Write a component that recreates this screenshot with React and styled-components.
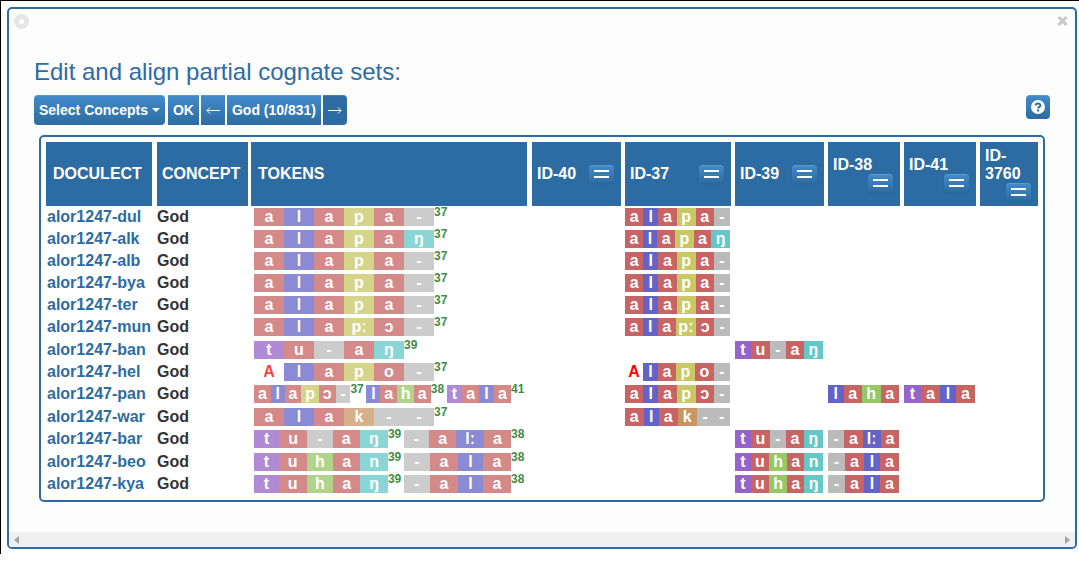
import React from "react";
import styled, { createGlobalStyle, css } from "styled-components";

const BLUE = "#2d6ca2";

const GlobalStyle = createGlobalStyle`
  * { box-sizing: border-box; }
  body {
    margin: 0;
    background: #fff;
    color: #333;
    font-family: "Liberation Sans", Arial, Helvetica, sans-serif;
    font-size: 16px;
  }
`;

const Page = styled.main`
  border-top: 1px solid #000;
  border-left: 1px solid #000;
  padding: 6px 2px 5px 6px;
`;

const Panel = styled.section`
  border: 2px solid ${BLUE};
  border-radius: 5px;
  background: #fdfdfd;
  overflow: hidden;
`;

const PanelBar = styled.header`
  display: flex;
  justify-content: space-between;
  align-items: flex-start;
  height: 48px;
  padding: 5px 7px 0 5px;
`;

const PlainButton = styled.button`
  display: flex;
  padding: 0;
  border: 0;
  background: none;
`;

const PanelBody = styled.div`
  padding: 0 30px 30px;
`;

const Title = styled.h1`
  margin: 0 -5px 8px;
  color: ${BLUE};
  font-size: 24px;
  font-weight: 400;
  line-height: 30px;
`;

const Toolbar = styled.div`
  display: flex;
  align-items: flex-start;
  gap: 2px;
  margin: 0 -5px 10px;
`;

const ToolButton = styled.button`
  display: flex;
  align-items: center;
  gap: 4px;
  height: 30px;
  padding: 0 5px;
  border: 0;
  border-radius: ${(p) => p.$corners || "0"};
  background: ${(p) => (p.$active ? BLUE : `linear-gradient(#428bca, ${BLUE})`)};
  color: #fff;
  font: bold 14px "Liberation Sans", Arial, sans-serif;
  white-space: nowrap;
  box-shadow: inset 0 1px 0 rgba(255, 255, 255, 0.12);
`;

const MenuButton = styled(ToolButton)`
  margin-right: 1px;
`;

const HelpButton = styled(ToolButton)`
  justify-content: center;
  width: 24px;
  height: 24px;
  margin-left: auto;
`;

const Frame = styled.div`
  padding: 5px;
  border: 2px solid ${BLUE};
  border-radius: 5px;
  background: #fff;
`;

const Table = styled.table`
  width: 100%;
  table-layout: fixed;
  border-collapse: separate;
  border-spacing: 0;
  font-weight: bold;
`;

const Col = styled.col`
  width: ${(p) => p.$width}px;
`;

const HeadCell = styled.th`
  height: 64px;
  padding: 0 7px 0 ${(p) => p.$inset || 5}px;
  border-right: ${(p) => p.$gap || 0}px solid #fff;
  background: ${BLUE};
  background-clip: padding-box;
  color: #fff;
  line-height: 18px;
  text-align: left;
`;

const HeadContent = styled.div`
  display: flex;
  flex-wrap: wrap;
  align-items: center;
  justify-content: space-between;
`;

const AlignButton = styled.button`
  display: flex;
  align-items: center;
  justify-content: center;
  width: 25px;
  height: 18px;
  margin-left: auto;
  padding: 0;
  border: 0;
  border-radius: 4px;
  background: linear-gradient(#428bca, ${BLUE});
  box-shadow: inset 0 1px 0 rgba(255, 255, 255, 0.15), 0 1px 2px rgba(0, 0, 0, 0.08);
`;

const Row = styled.tr`
  height: ${(p) => (p.$tall ? 23 : 22)}px;
`;

const Cell = styled.td`
  padding: 0 ${(p) => p.$end || 0}px 0 ${(p) => p.$start || 0}px;
  line-height: 22px;
  white-space: nowrap;
  vertical-align: top;
`;

const DoculectLink = styled.a`
  color: ${BLUE};
  text-decoration: none;
`;

const TokenLine = styled.div`
  display: flex;
  padding-top: 2px;
  opacity: 0.75;
`;

const Morpheme = styled.div`
  display: flex;
  flex: ${(p) => (p.$fill ? `${p.$count} 1 0` : "none")};
`;

const CognateId = styled.sup`
  width: 16px;
  color: #006400;
  font-size: 12px;
  line-height: 8px;
`;

const Alignment = styled.div`
  display: flex;
  padding-top: 2px;
`;

const soundClasses = {
  a: ["#c86464", 18],
  o: ["#c86464", 19],
  u: ["#c86464", 19],
  "ɔ": ["#c86464", 18],
  l: ["#6464c8", 15],
  "lː": ["#6464c8", 18],
  p: ["#c8c864", 19],
  "pː": ["#c8c864", 21],
  k: ["#c89664", 19],
  t: ["#9664c8", 16],
  h: ["#96c864", 18],
  n: ["#64c8c8", 19],
  "ŋ": ["#64c8c8", 19],
  "-": ["#bbbbbb", 16],
  A: ["transparent", 18],
};

const Sound = styled.span`
  flex: ${(p) => (p.$even ? "0 0 30px" : `1 1 ${soundClasses[p.$sound][1]}px`)};
  min-width: 0;
  height: 18px;
  background: ${(p) => soundClasses[p.$sound][0]};
  color: #fff;
  line-height: 18px;
  text-align: center;
  ${(p) => p.$sound === "A" && css`color: #f00;`}
`;

const ScrollTrack = styled.div`
  display: flex;
  align-items: center;
  justify-content: space-between;
  height: 15px;
  padding: 0 5px;
  background: #f0f0f0;
`;

const columns = [
  { label: "DOCULECT", width: 111, gap: 5, inset: 7 },
  { label: "CONCEPT", width: 94, gap: 3 },
  { label: "TOKENS", width: 281, gap: 5, inset: 7 },
  { label: "ID-40", width: 93, gap: 4, id: 40 },
  { label: "ID-37", width: 110, gap: 4, id: 37 },
  { label: "ID-39", width: 93, gap: 4, id: 39 },
  { label: "ID-38", width: 76, gap: 4, id: 38 },
  { label: "ID-41", width: 76, gap: 4, id: 41 },
  { label: "ID-3760", width: 58, id: 3760 },
];

const words = [
  { name: "dul", parts: [[37, "a l a p a -"]] },
  { name: "alk", parts: [[37, "a l a p a ŋ"]] },
  { name: "alb", parts: [[37, "a l a p a -"]] },
  { name: "bya", parts: [[37, "a l a p a -"]] },
  { name: "ter", parts: [[37, "a l a p a -"]] },
  { name: "mun", tall: true, parts: [[37, "a l a pː ɔ -"]] },
  { name: "ban", parts: [[39, "t u - a ŋ"]] },
  { name: "hel", parts: [[37, "A l a p o -"]] },
  { name: "pan", tall: true, parts: [[37, "a l a p ɔ -"], [38, "l a h a"], [41, "t a l a"]] },
  { name: "war", parts: [[37, "a l a k - -"]] },
  { name: "bar", tall: true, parts: [[39, "t u - a ŋ"], [38, "- a lː a"]] },
  { name: "beo", parts: [[39, "t u h a n"], [38, "- a l a"]] },
  { name: "kya", parts: [[39, "t u h a ŋ"], [38, "- a l a"]] },
];

function Sounds({ text, even }) {
  return text.split(" ").map((s, i) => (
    <Sound key={i} $sound={s} $even={even}>{s}</Sound>
  ));
}

function Tokens({ parts }) {
  const fill = parts.length > 1;
  return (
    <TokenLine>
      {parts.map(([id, text]) => (
        <React.Fragment key={id}>
          <Morpheme $fill={fill} $count={text.split(" ").length}>
            <Sounds text={text} even={!fill} />
          </Morpheme>
          <CognateId>{id}</CognateId>
        </React.Fragment>
      ))}
    </TokenLine>
  );
}

function WordRow({ word }) {
  return (
    <Row $tall={word.tall}>
      <Cell $start={1}>
        <DoculectLink href="#">alor1247-{word.name}</DoculectLink>
      </Cell>
      <Cell>God</Cell>
      <Cell $start={3} $end={5}>
        <Tokens parts={word.parts} />
      </Cell>
      {columns.filter((c) => c.id).map((c) => {
        const part = word.parts.find(([id]) => id === c.id);
        return (
          <Cell key={c.id} $end={5}>
            {part && <Alignment><Sounds text={part[1]} /></Alignment>}
          </Cell>
        );
      })}
    </Row>
  );
}

function Arrow({ back }) {
  return (
    <svg width="14" height="8" viewBox="0 0 14 8" fill="none" stroke="#fff">
      <path d={back ? "M14 4.5H1 M4 1.5L1 4.5L4 7.5" : "M0 4.5H13 M10 1.5L13 4.5L10 7.5"} />
    </svg>
  );
}

export default function App() {
  return (
    <Page>
      <GlobalStyle />
      <Panel>
        <PanelBar>
          <PlainButton aria-label="Refresh panel">
            <svg width="15" height="15" viewBox="0 0 15 15">
              <circle cx="7.5" cy="7.5" r="5" fill="#fff" stroke="#e6e6e6" strokeWidth="5" />
            </svg>
          </PlainButton>
          <PlainButton aria-label="Close panel">
            <svg width="11" height="13" viewBox="0 0 11 13">
              <path d="M1.5 3 L9.5 11 M9.5 3 L1.5 11" stroke="#c8c8c8" strokeWidth="3" />
            </svg>
          </PlainButton>
        </PanelBar>
        <PanelBody>
          <Title>Edit and align partial cognate sets:</Title>
          <Toolbar>
            <MenuButton $corners="4px" aria-haspopup="true">
              Select Concepts
              <svg width="8" height="4" viewBox="0 0 8 4"><path d="M0 0h8L4 4z" fill="#fff" /></svg>
            </MenuButton>
            <ToolButton>OK</ToolButton>
            <ToolButton aria-label="Previous concept"><Arrow back /></ToolButton>
            <ToolButton>God (10/831)</ToolButton>
            <ToolButton $corners="0 4px 4px 0" $active aria-label="Next concept"><Arrow /></ToolButton>
            <HelpButton $corners="4px" aria-label="Help">
              <svg width="14" height="14" viewBox="0 0 14 14">
                <circle cx="7" cy="7" r="7" fill="#fff" />
                <path d="M4.7 5.6 C4.7 2.9 9.4 3 9.4 5.4 C9.4 6.9 7.2 6.9 7.2 8.4" fill="none" stroke={BLUE} strokeWidth="2" />
                <path d="M6.1 9.4h2.1v2H6.1z" fill={BLUE} />
              </svg>
            </HelpButton>
          </Toolbar>
          <Frame>
            <Table>
              <colgroup>
                {columns.map((c) => <Col key={c.label} $width={c.width} />)}
              </colgroup>
              <thead>
                <tr>
                  {columns.map((c) => (
                    <HeadCell key={c.label} scope="col" $gap={c.gap} $inset={c.inset}>
                      {c.id ? (
                        <HeadContent>
                          <span>{c.label}</span>
                          <AlignButton aria-label={`Align ${c.label}`}>
                            <svg width="15" height="8" viewBox="0 0 15 8">
                              <path d="M0 0h15v2H0z M0 6h15v2H0z" fill="#fff" />
                            </svg>
                          </AlignButton>
                        </HeadContent>
                      ) : c.label}
                    </HeadCell>
                  ))}
                </tr>
              </thead>
              <tbody>
                {words.map((w) => <WordRow key={w.name} word={w} />)}
              </tbody>
            </Table>
          </Frame>
        </PanelBody>
        <ScrollTrack>
          <svg width="5" height="8" viewBox="0 0 5 8"><path d="M5 0v8L0 4z" fill="#a3a3a3" /></svg>
          <svg width="5" height="8" viewBox="0 0 5 8"><path d="M0 0v8L5 4z" fill="#a3a3a3" /></svg>
        </ScrollTrack>
      </Panel>
    </Page>
  );
}
